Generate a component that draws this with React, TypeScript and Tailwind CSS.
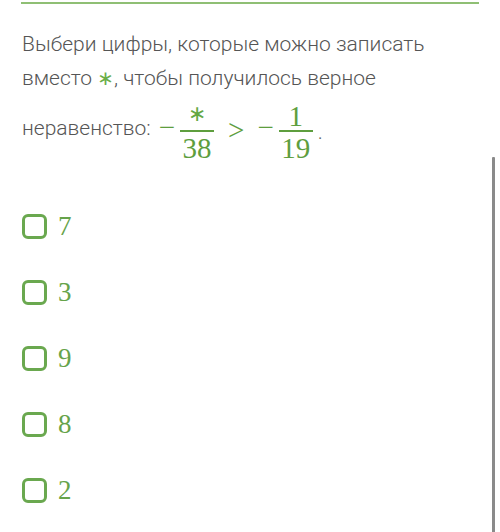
const options = ["7", "3", "9", "8", "2"];

function Fraction({ top, bottom }: { top: React.ReactNode; bottom: string }) {
  return (
    <div className="mt-[11.5px] flex w-[34px] flex-col items-center">
      <div className="h-[24px] leading-[24px]">{top}</div>
      <div className="h-[1.5px] w-full bg-[#5e9e3e]" />
      <div className="mt-[4.5px] h-[24px] leading-[24px]">{bottom}</div>
    </div>
  );
}

export default function App() {
  return (
    <div className="relative h-[532px] w-[500px] overflow-hidden bg-white">
      <div className="mx-[21px] mt-[2px] h-[2px] bg-[#8fbf74]" />

      <div className="px-[22px] pt-[22.5px] font-['Roboto',sans-serif] text-[21px] font-light leading-[34px] text-[#555]">
        <div>Выбери цифры, которые можно записать</div>
        <div>
          вместо{" "}
          <span className="font-['DejaVu_Sans',sans-serif] text-[20px] font-normal leading-none text-[#6aad48]">
            ∗
          </span>
          , чтобы получилось верное
        </div>
        <div className="flex h-[66px] items-start">
          <span className="mt-[16px]">неравенство:</span>
          <div className="ml-[8px] flex items-start font-['Liberation_Serif',serif] text-[29px] font-normal text-[#5e9e3e]">
            <span className="mt-[20.5px] leading-[24px]">−</span>
            <div className="ml-[5px]">
              <Fraction
                top={
                  <span className="relative top-[-7px] font-['DejaVu_Sans',sans-serif] text-[22px] leading-none text-[#64a844]">
                    ∗
                  </span>
                }
                bottom="38"
              />
            </div>
            <span className="ml-[14px] mt-[23px] leading-[24px]">&gt;</span>
            <span className="ml-[13px] mt-[20.5px] leading-[24px]">−</span>
            <div className="ml-[5px]">
              <Fraction top={<span className="relative top-[-2px]">1</span>} bottom="19" />
            </div>
          </div>
          <span className="ml-[5px] mt-[20px] text-[#666]">.</span>
        </div>
      </div>

      <div className="mt-[53.5px] flex flex-col gap-[41px] px-[22px]">
        {options.map((n) => (
          <label key={n} className="flex h-[25px] items-center">
            <span className="h-[25px] w-[25px] rounded-[6px] border-[3px] border-[#6aa84f]" />
            <span className="ml-[11px] font-['Liberation_Serif',serif] text-[27px] leading-none text-[#66a34a]">
              {n}
            </span>
          </label>
        ))}
      </div>

      <div className="absolute right-[5px] top-[157px] bottom-0 w-[3px] rounded-t-[1px] bg-[#8a8a8a]" />
    </div>
  );
}
